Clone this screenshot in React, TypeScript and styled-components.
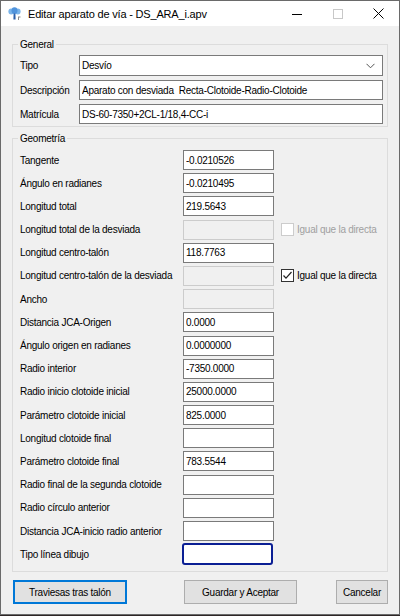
import React from "react";
import styled, { createGlobalStyle } from "styled-components";

const GlobalStyle = createGlobalStyle`
  html, body { margin: 0; padding: 0; }
  body {
    background: #2e2626;
    font-family: "Liberation Sans", Arial, sans-serif;
  }
  * { box-sizing: border-box; }
`;

const Window = styled.div`
  width: 400px;
  height: 615px;
  border: 1px solid #6a6a6a;
  background: #f0f0f0;
  display: flex;
  flex-direction: column;
`;

const TitleBar = styled.div`
  height: 25px;
  background: #ffffff;
  display: flex;
  align-items: center;
  padding-left: 7px;
`;

const Title = styled.div`
  margin-left: 7px;
  font-size: 11px;
  letter-spacing: -0.18px;
  color: #000;
  flex: 1;
`;

const CtrlButton = styled.div`
  width: 41px;
  height: 25px;
  display: flex;
  align-items: center;
  justify-content: center;
`;

const Body = styled.div`
  flex: 1;
  display: flex;
  flex-direction: column;
  padding: 0 11px;
  font-size: 10px;
  letter-spacing: -0.25px;
  color: #000;
`;

const Group = styled.fieldset<{ $top: number; $padTop: number; $padBottom: number }>`
  margin: ${(p) => p.$top}px 0 0 0;
  padding: ${(p) => p.$padTop}px 4px ${(p) => p.$padBottom}px 7px;
  border: 1px solid #dcdcdc;
  min-width: 0;
`;

const Legend = styled.legend`
  padding: 0 2px;
  margin-left: -2px;
  line-height: 13px;
  font-size: 10px;
`;

const GeneralGrid = styled.div`
  display: grid;
  grid-template-columns: 59px 1fr;
  row-gap: 4px;
  align-items: center;
`;

const Label = styled.div<{ $muted?: boolean }>`
  color: ${(p) => (p.$muted ? "#a0a0a0" : "#000")};
  white-space: nowrap;
`;

const TextBox = styled.input<{ $disabled?: boolean; $focused?: boolean }>`
  height: ${(p) => (p.$focused ? 22 : 20)}px;
  width: 100%;
  margin: ${(p) => (p.$focused ? "-1px 0 -1px -1px" : "0")};
  border: ${(p) =>
    p.$focused ? "2px solid #0b1f94" : p.$disabled ? "1px solid #cccccc" : "1px solid #7a7a7a"};
  border-radius: ${(p) => (p.$focused ? "3px" : "0")};
  background: ${(p) => (p.$disabled ? "#f0f0f0" : "#ffffff")};
  padding: 0 2px;
  font-family: "Liberation Sans", Arial, sans-serif;
  font-size: 10px;
  letter-spacing: -0.25px;
  color: #000;
  outline: none;
`;

const Select = styled.div`
  height: 21px;
  border: 1px solid #7a7a7a;
  background: #fff;
  display: flex;
  align-items: center;
  justify-content: space-between;
  padding: 0 7px 0 2px;
`;

const GeoList = styled.div`
  display: flex;
  flex-direction: column;
  gap: 3.2px;
`;

const GeoRow = styled.div`
  display: grid;
  grid-template-columns: 163px 91px 1fr;
  align-items: center;
  height: 20px;
`;

const CheckWrap = styled.label<{ $disabled?: boolean }>`
  display: flex;
  align-items: center;
  gap: 3px;
  margin-left: 7px;
  color: ${(p) => (p.$disabled ? "#a0a0a0" : "#000")};
  white-space: nowrap;
`;

const CheckBox = styled.span<{ $disabled?: boolean }>`
  width: 13px;
  height: 13px;
  border: 1px solid ${(p) => (p.$disabled ? "#cccccc" : "#333333")};
  background: #fff;
  display: flex;
  align-items: center;
  justify-content: center;
`;

const ButtonRow = styled.div`
  display: flex;
  margin-top: 8px;
  padding-left: 1px;
`;

const Button = styled.div<{ $w: number; $ml?: string; $default?: boolean }>`
  width: ${(p) => p.$w}px;
  height: 24px;
  margin-left: ${(p) => p.$ml || "0"};
  background: #e1e1e1;
  border: 1px solid ${(p) => (p.$default ? "#0078d7" : "#adadad")};
  box-shadow: ${(p) => (p.$default ? "inset 0 0 0 1px #0078d7" : "none")};
  display: flex;
  align-items: center;
  justify-content: center;
  font-size: 10px;
  letter-spacing: -0.25px;
`;

const AppIcon = () => (
  <svg width="13" height="13" viewBox="0 0 13 13">
    <ellipse cx="3.2" cy="4.5" rx="2.8" ry="3" fill="#7ab4ea" />
    <ellipse cx="9.8" cy="4.5" rx="2.8" ry="3" fill="#7ab4ea" />
    <ellipse cx="6.5" cy="3.6" rx="3" ry="3.4" fill="#4f93dc" />
    <path d="M5.6 6.5 L7.4 6.5 L7.6 12.5 L5.4 12.5 Z" fill="#2c5fa8" />
    <path d="M10 10 L12.5 10 M10.5 10 L10.5 13" stroke="#8a8a8a" strokeWidth="1" />
  </svg>
);

const Chevron = () => (
  <svg width="9" height="6" viewBox="0 0 9 6">
    <path d="M0.5 0.8 L4.5 4.8 L8.5 0.8" fill="none" stroke="#555" strokeWidth="1" />
  </svg>
);

const CheckMark = () => (
  <svg width="11" height="11" viewBox="0 0 11 11">
    <path d="M1.5 5.5 L4 8.2 L9.5 2" fill="none" stroke="#222" strokeWidth="1.2" />
  </svg>
);

type Geo = {
  label: string;
  value?: string;
  disabled?: boolean;
  focused?: boolean;
  check?: "disabled" | "checked";
};

const geoRows: Geo[] = [
  { label: "Tangente", value: "-0.0210526" },
  { label: "Ángulo en radianes", value: "-0.0210495" },
  { label: "Longitud total", value: "219.5643" },
  { label: "Longitud total de la desviada", disabled: true, check: "disabled" },
  { label: "Longitud centro-talón", value: "118.7763" },
  { label: "Longitud centro-talón de la desviada", disabled: true, check: "checked" },
  { label: "Ancho", disabled: true },
  { label: "Distancia JCA-Origen", value: "0.0000" },
  { label: "Ángulo origen en radianes", value: "0.0000000" },
  { label: "Radio interior", value: "-7350.0000" },
  { label: "Radio inicio clotoide inicial", value: "25000.0000" },
  { label: "Parámetro clotoide inicial", value: "825.0000" },
  { label: "Longitud clotoide final", value: "" },
  { label: "Parámetro clotoide final", value: "783.5544" },
  { label: "Radio final de la segunda clotoide", value: "" },
  { label: "Radio círculo anterior", value: "" },
  { label: "Distancia JCA-inicio radio anterior", value: "" },
  { label: "Tipo línea dibujo", value: "", focused: true },
];

export default function App() {
  return (
    <>
      <GlobalStyle />
      <Window>
        <TitleBar>
          <AppIcon />
          <Title>Editar aparato de vía - DS_ARA_i.apv</Title>
          <CtrlButton>
            <svg width="10" height="10" viewBox="0 0 10 10">
              <path d="M0 5.5 L10 5.5" stroke="#000" strokeWidth="1" />
            </svg>
          </CtrlButton>
          <CtrlButton>
            <svg width="10" height="10" viewBox="0 0 10 10">
              <rect x="0.5" y="0.5" width="9" height="9" fill="none" stroke="#c8c8c8" strokeWidth="1" />
            </svg>
          </CtrlButton>
          <CtrlButton>
            <svg width="11" height="11" viewBox="0 0 11 11">
              <path d="M0.5 0.5 L10.5 10.5 M10.5 0.5 L0.5 10.5" stroke="#000" strokeWidth="1" />
            </svg>
          </CtrlButton>
        </TitleBar>
        <Body>
          <Group $top={12} $padTop={4} $padBottom={2}>
            <Legend>General</Legend>
            <GeneralGrid>
              <Label>Tipo</Label>
              <Select>
                <span>Desvío</span>
                <Chevron />
              </Select>
              <Label>Descripción</Label>
              <TextBox readOnly value="Aparato con desviada  Recta-Clotoide-Radio-Clotoide" />
              <Label>Matrícula</Label>
              <TextBox readOnly value="DS-60-7350+2CL-1/18,4-CC-i" />
            </GeneralGrid>
          </Group>
          <Group $top={5} $padTop={5} $padBottom={7}>
            <Legend>Geometría</Legend>
            <GeoList>
              {geoRows.map((r) => (
                <GeoRow key={r.label}>
                  <Label>{r.label}</Label>
                  <TextBox
                    readOnly
                    value={r.value ?? ""}
                    $disabled={r.disabled}
                    $focused={r.focused}
                  />
                  {r.check && (
                    <CheckWrap $disabled={r.check === "disabled"}>
                      <CheckBox $disabled={r.check === "disabled"}>
                        {r.check === "checked" && <CheckMark />}
                      </CheckBox>
                      Igual que la directa
                    </CheckWrap>
                  )}
                </GeoRow>
              ))}
            </GeoList>
          </Group>
          <ButtonRow>
            <Button $w={114} $default>
              Traviesas tras talón
            </Button>
            <Button $w={113} $ml="57px">
              Guardar y Aceptar
            </Button>
            <Button $w={52} $ml="auto">
              Cancelar
            </Button>
          </ButtonRow>
        </Body>
      </Window>
    </>
  );
}
